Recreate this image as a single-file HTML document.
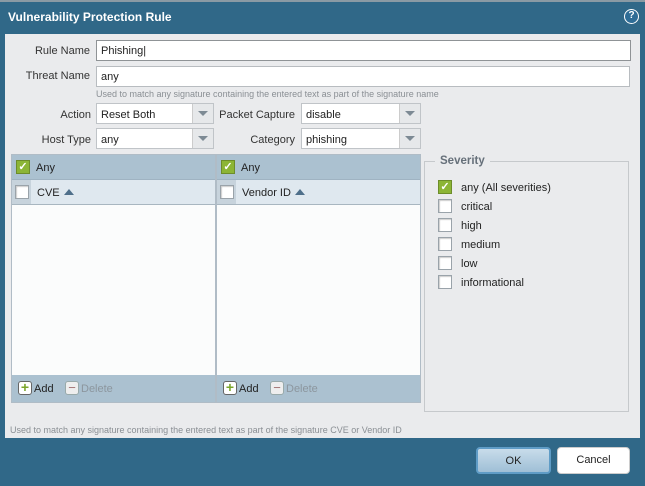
<!DOCTYPE html>
<html><head><style>
*{box-sizing:border-box;margin:0;padding:0}
body{width:645px;height:486px;background:#306888;font-family:"Liberation Sans",sans-serif;font-size:11px;color:#222;position:relative;overflow:hidden}
.a{position:absolute}
.top{left:0;top:0;width:645px;height:2px;background:#8a9aa4}
.title{left:8px;top:10px;color:#fff;font-weight:bold;font-size:12px}
.help{left:624px;top:9px;width:15px;height:15px;border-radius:50%;background:#2f6d96;border:1.5px solid #fff;color:#fff;font-weight:bold;font-size:10px;text-align:center;line-height:12px}
.panel{left:5px;top:34px;width:635px;height:404px;background:#eaebed}
.lbl{text-align:right;font-size:11px;color:#333}
.inp{background:#fff;border:1px solid #b8bcc0;padding:4px 4px 2px;font-size:11px;height:21px;line-height:13px}
.sel{background:#fff;border:1px solid #c0c4c8;height:21px}
.sel span{position:absolute;left:4px;top:5px}
.sel i{position:absolute;right:0;top:0;width:21px;height:19px;background:#e6e8ea;border-left:1px solid #ccc}
.sel i:after{content:"";position:absolute;left:5px;top:7px;border-left:5px solid transparent;border-right:5px solid transparent;border-top:5px solid #7d8a94}
.hint{font-size:9px;color:#8a8f94}
.ck{width:14px;height:14px;background:#fff;border:1px solid #9aa3aa;box-shadow:inset 1px 1px 1px #ccc}
.ckg{width:14px;height:14px;background:#8cb536;border:1px solid #6d8d2a;color:#fff;font-size:11px;line-height:12px;text-align:center;font-weight:bold}
.grid{background:#fbfcfc;border:1px solid #b0bcc6}
.gh{left:0;top:0;right:0;height:24px;background:#abc1d0}
.ch{left:0;top:24px;right:0;height:26px;background:#dfe8ef;border-top:1px solid #9fb3c2;border-bottom:1px solid #a8b6c0}
.cc{left:0;top:0;width:19px;height:24px;background:#c7d3dc}
.gf{left:0;bottom:0;right:0;height:27px;background:#abc1d0}
.tri{display:inline-block;border-left:5px solid transparent;border-right:5px solid transparent;border-bottom:6px solid #4e6f8a;margin-left:4px;vertical-align:1px}
.pl{width:14px;height:14px;border:1px solid #666;border-radius:3px;background:#fff;color:#7aa52a;font-weight:bold;text-align:center;line-height:11px;font-size:14px}
.mi{width:14px;height:14px;border:1px solid #9aa;border-radius:3px;background:#eee;color:#a07070;text-align:center;line-height:11px;font-size:13px}
.btn{height:27px;border-radius:4px;text-align:center;line-height:25px;font-size:11px}
</style></head><body>
<div class="a top"></div>
<div class="a title">Vulnerability Protection Rule</div>
<div class="a help">?</div>
<div class="a panel"></div>

<div class="a lbl" style="left:20px;top:45px;width:70px">Rule Name</div>
<div class="a inp" style="left:96px;top:40px;width:535px;border-color:#8f9396">Phishing|</div>
<div class="a lbl" style="left:10px;top:70px;width:80px">Threat Name</div>
<div class="a inp" style="left:96px;top:66px;width:534px">any</div>
<div class="a hint" style="left:96px;top:89px">Used to match any signature containing the entered text as part of the signature name</div>

<div class="a lbl" style="left:20px;top:109px;width:71px">Action</div>
<div class="a sel" style="left:96px;top:103px;width:118px"><span>Reset Both</span><i></i></div>
<div class="a lbl" style="left:210px;top:109px;width:85px">Packet Capture</div>
<div class="a sel" style="left:301px;top:103px;width:120px"><span>disable</span><i></i></div>
<div class="a lbl" style="left:20px;top:134px;width:71px">Host Type</div>
<div class="a sel" style="left:96px;top:128px;width:118px"><span>any</span><i></i></div>
<div class="a lbl" style="left:210px;top:134px;width:85px">Category</div>
<div class="a sel" style="left:301px;top:128px;width:120px"><span>phishing</span><i></i></div>

<div class="a grid" style="left:11px;top:154px;width:205px;height:249px">
 <div class="a gh"><div class="a ckg" style="left:4px;top:5px">✓</div><div class="a" style="left:24px;top:7px">Any</div></div>
 <div class="a ch"><div class="a cc"></div><div class="a ck" style="left:3px;top:5px"></div><div class="a" style="left:25px;top:7px">CVE<span class="tri"></span></div></div>
 <div class="a gf"><div class="a pl" style="left:6px;top:6px">+</div><div class="a" style="left:22px;top:8px">Add</div><div class="a mi" style="left:53px;top:6px">−</div><div class="a" style="left:69px;top:8px;color:#8c969e">Delete</div></div>
</div>
<div class="a grid" style="left:216px;top:154px;width:205px;height:249px">
 <div class="a gh"><div class="a ckg" style="left:4px;top:5px">✓</div><div class="a" style="left:24px;top:7px">Any</div></div>
 <div class="a ch"><div class="a cc"></div><div class="a ck" style="left:3px;top:5px"></div><div class="a" style="left:25px;top:7px">Vendor ID<span class="tri"></span></div></div>
 <div class="a gf"><div class="a pl" style="left:6px;top:6px">+</div><div class="a" style="left:22px;top:8px">Add</div><div class="a mi" style="left:53px;top:6px">−</div><div class="a" style="left:69px;top:8px;color:#8c969e">Delete</div></div>
</div>

<div class="a" style="left:424px;top:161px;width:205px;height:251px;border:1px solid #c6c9cc"></div>
<div class="a" style="left:435px;top:155px;padding:0 5px;background:#eaebed;font-weight:bold;color:#66707a;font-size:11.5px">Severity</div>
<div class="a ckg" style="left:438px;top:180px">✓</div><div class="a" style="left:461px;top:182px">any (All severities)</div>
<div class="a ck" style="left:438px;top:199px"></div><div class="a" style="left:461px;top:201px">critical</div>
<div class="a ck" style="left:438px;top:218px"></div><div class="a" style="left:461px;top:220px">high</div>
<div class="a ck" style="left:438px;top:237px"></div><div class="a" style="left:461px;top:239px">medium</div>
<div class="a ck" style="left:438px;top:256px"></div><div class="a" style="left:461px;top:258px">low</div>
<div class="a ck" style="left:438px;top:275px"></div><div class="a" style="left:461px;top:277px">informational</div>

<div class="a hint" style="left:10px;top:425px">Used to match any signature containing the entered text as part of the signature CVE or Vendor ID</div>

<div class="a btn" style="left:476px;top:447px;width:75px;background:linear-gradient(#c8dcea,#9fbfd6);border:2px solid #5f9cc6">OK</div>
<div class="a btn" style="left:557px;top:447px;width:73px;background:#fff;border:1px solid #ccc">Cancel</div>
</body></html>
